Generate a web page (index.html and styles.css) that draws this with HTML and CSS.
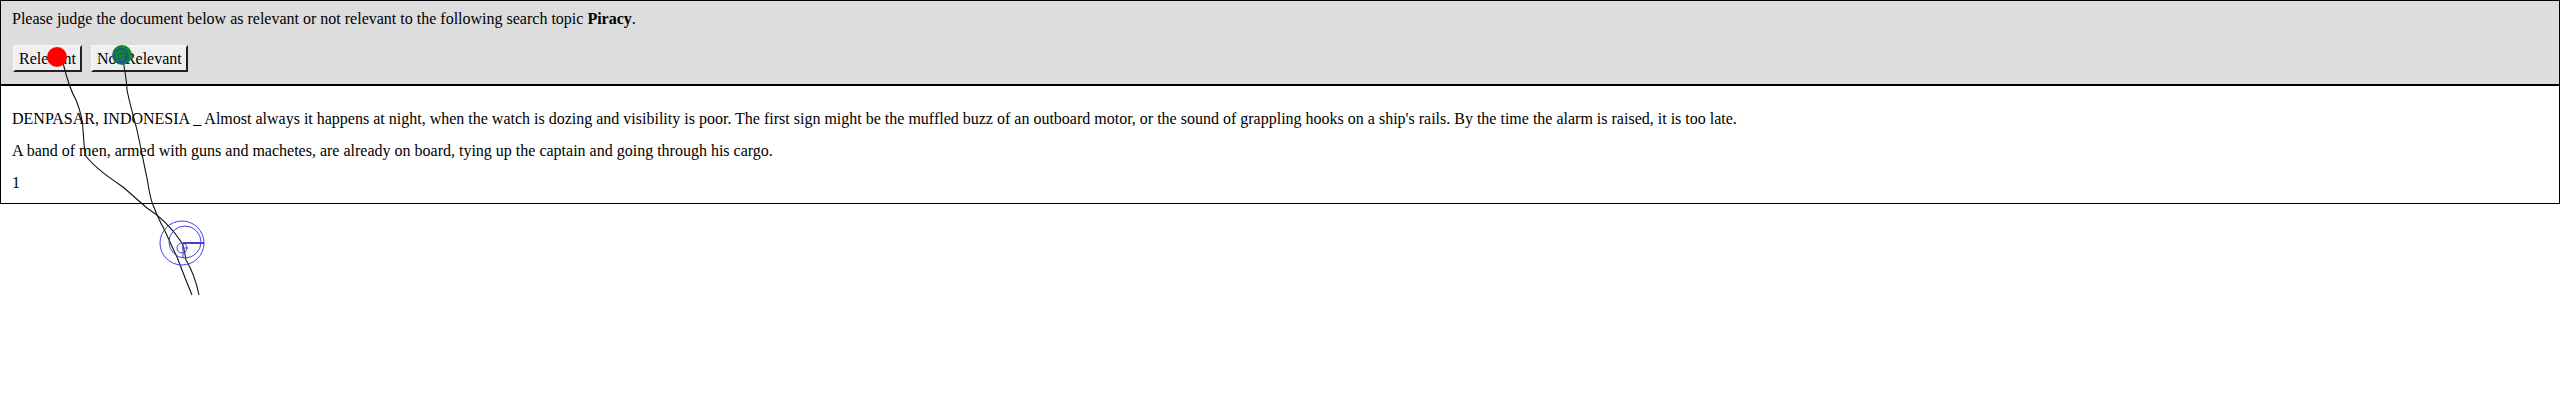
FILE: index.html
```html
<!DOCTYPE html>
<html>
<head>
<meta charset="utf-8">
<link rel="stylesheet" href="styles.css">
</head>
<body>
<div class="frame">
  <div class="prompt">
    <p class="question">Please judge the document below as relevant or not relevant to the following search topic <b>Piracy</b>.</p>
    <div class="actions">
      <button class="btn">Relevant</button>
      <button class="btn">Not Relevant</button>
    </div>
  </div>
  <div class="doc">
    <p>DENPASAR, INDONESIA _ Almost always it happens at night, when the watch is dozing and visibility is poor. The first sign might be the muffled buzz of an outboard motor, or the sound of grappling hooks on a ship's rails. By the time the alarm is raised, it is too late.</p>
    <p>A band of men, armed with guns and machetes, are already on board, tying up the captain and going through his cargo.</p>
    <p>1</p>
  </div>
</div>
<svg class="trace" width="300" height="320" viewBox="0 0 300 320">
  <path d="M63 63 C66 75 70 90 76 100 C80 110 83 120 83 130 C84 145 85 152 85 155 C95 168 110 178 123 187 C130 193 140 202 147 208 C160 216 172 228 182 243 C185 250 185 256 186 260 C192 270 196 280 199 295" fill="none" stroke="#111" stroke-width="1.1"/>
  <path d="M123 60 C125 72 127 82 127 90 C130 105 134 118 137 130 C141 148 144 165 147 178 C149 190 150 198 153 205 C157 215 160 222 163 227 C168 237 172 247 177 257 C182 270 187 283 192 295" fill="none" stroke="#111" stroke-width="1.1"/>
  <circle cx="57" cy="57" r="10" fill="#ff0000"/>
  <circle cx="122" cy="55" r="10" fill="#13892c"/>
  <circle cx="121" cy="56" r="7" fill="none" stroke="#1c4fa0" stroke-width="1.5"/>
  <circle cx="122" cy="57" r="4" fill="none" stroke="#1c4fa0" stroke-width="1.2"/>
  <line x1="122" y1="57" x2="128" y2="57" stroke="#1c4fa0" stroke-width="1.2"/>
  <circle cx="182" cy="243" r="22" fill="none" stroke="#4040e0" stroke-width="1"/>
  <circle cx="185" cy="242" r="16" fill="none" stroke="#4040e0" stroke-width="1"/>
  <circle cx="182" cy="248" r="5" fill="none" stroke="#4040e0" stroke-width="1"/>
  <line x1="182" y1="248" x2="188" y2="248" stroke="#4040e0" stroke-width="1"/>
  <line x1="183" y1="243" x2="204" y2="243" stroke="#4040e0" stroke-width="2"/>
  <line x1="183" y1="243" x2="183" y2="258" stroke="#4040e0" stroke-width="1"/>
</svg>
</body>
</html>
```
FILE: styles.css
```css
html, body {
  margin: 0;
  padding: 0;
  background: #ffffff;
}
body {
  font-family: "Liberation Serif", "Times New Roman", serif;
  font-size: 16px;
  color: #000;
  position: relative;
  min-height: 400px;
}
.frame {
  border: 1px solid #000;
  width: 2558px;
}
.prompt {
  background: #dddddd;
  border-bottom: 2px solid #000;
  padding: 9px 11px 12px;
}
.question {
  margin: 0;
  line-height: 18px;
}
.actions {
  display: flex;
  gap: 9px;
  margin-top: 17px;
  padding-left: 1px;
}
.btn {
  font-family: "Liberation Serif", "Times New Roman", serif;
  font-size: 16px;
  height: 27px;
  padding: 0 4px;
  background: #efefef;
  border: 2px outset #f4f4f4;
  border-right-color: #777;
  border-bottom-color: #777;
  color: #000;
}
.doc {
  padding: 25px 11px 12px;
}
.doc p {
  margin: 0 0 16px;
  line-height: 16px;
}
.doc p:last-child {
  margin-bottom: 0;
}
.trace {
  position: absolute;
  left: 0;
  top: 0;
  overflow: visible;
  pointer-events: none;
}
```
